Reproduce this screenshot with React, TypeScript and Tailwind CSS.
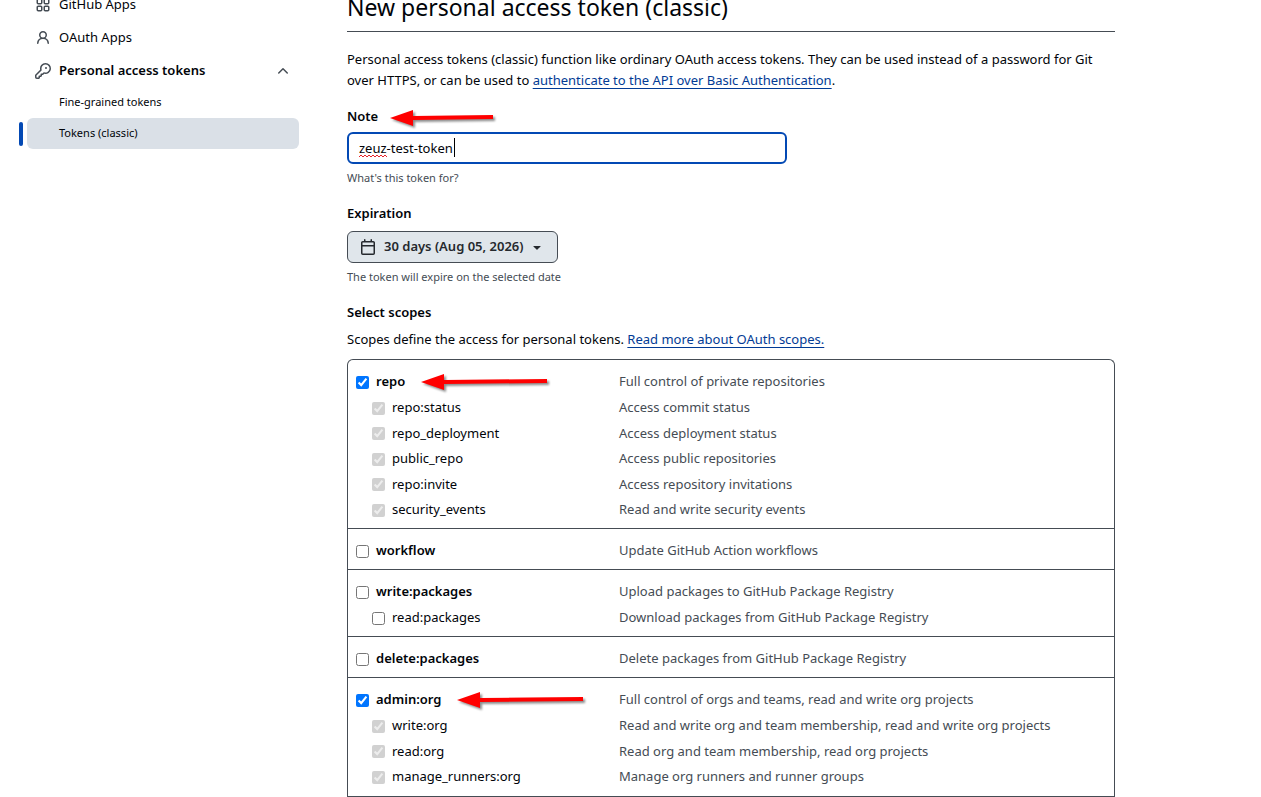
import type { ReactNode } from "react";

const icons = {
  apps: "M1.5 3.25c0-.966.784-1.75 1.75-1.75h2.5c.966 0 1.75.784 1.75 1.75v2.5A1.75 1.75 0 0 1 5.75 7.5h-2.5A1.75 1.75 0 0 1 1.5 5.75Zm7 0c0-.966.784-1.75 1.75-1.75h2.5c.966 0 1.75.784 1.75 1.75v2.5a1.75 1.75 0 0 1-1.75 1.75h-2.5A1.75 1.75 0 0 1 8.5 5.75Zm-7 7c0-.966.784-1.75 1.75-1.75h2.5c.966 0 1.75.784 1.75 1.75v2.5a1.75 1.75 0 0 1-1.75 1.75h-2.5a1.75 1.75 0 0 1-1.75-1.75Zm7 0c0-.966.784-1.75 1.75-1.75h2.5c.966 0 1.75.784 1.75 1.75v2.5a1.75 1.75 0 0 1-1.75 1.75h-2.5a1.75 1.75 0 0 1-1.75-1.75ZM3.25 3a.25.25 0 0 0-.25.25v2.5c0 .138.112.25.25.25h2.5A.25.25 0 0 0 6 5.75v-2.5A.25.25 0 0 0 5.75 3Zm7 0a.25.25 0 0 0-.25.25v2.5c0 .138.112.25.25.25h2.5a.25.25 0 0 0 .25-.25v-2.5a.25.25 0 0 0-.25-.25Zm-7 7a.25.25 0 0 0-.25.25v2.5c0 .138.112.25.25.25h2.5a.25.25 0 0 0 .25-.25v-2.5a.25.25 0 0 0-.25-.25Zm7 0a.25.25 0 0 0-.25.25v2.5c0 .138.112.25.25.25h2.5a.25.25 0 0 0 .25-.25v-2.5a.25.25 0 0 0-.25-.25Z",
  person:
    "M10.561 8.073a6.005 6.005 0 0 1 3.432 5.142.75.75 0 1 1-1.498.07 4.5 4.5 0 0 0-8.99 0 .75.75 0 0 1-1.498-.07 6.004 6.004 0 0 1 3.431-5.142 3.999 3.999 0 1 1 5.123 0ZM10.5 5a2.5 2.5 0 1 0-5 0 2.5 2.5 0 0 0 5 0Z",
  key: "M10.5 0a5.499 5.499 0 1 1-1.288 10.848l-.932.932a.749.749 0 0 1-.53.22H7v.75a.749.749 0 0 1-.22.53l-.5.5a.749.749 0 0 1-.53.22H5v.75a.749.749 0 0 1-.22.53l-.5.5a.749.749 0 0 1-.53.22h-2A1.75 1.75 0 0 1 0 14.25v-2c0-.199.079-.389.22-.53l4.932-4.932A5.5 5.5 0 0 1 10.5 0Zm-4 5.5c-.001.431.069.86.205 1.269a.75.75 0 0 1-.181.768L1.5 12.56v1.69c0 .138.112.25.25.25h1.69l.06-.06v-1.19a.75.75 0 0 1 .75-.75h1.19l.06-.06v-1.19a.75.75 0 0 1 .75-.75h1.19l1.023-1.025a.75.75 0 0 1 .768-.18A4 4 0 1 0 6.5 5.5ZM11 6a1 1 0 1 1 0-2 1 1 0 0 1 0 2Z",
  chevronUp:
    "M3.22 10.53a.749.749 0 0 1 0-1.06l4.25-4.25a.749.749 0 0 1 1.06 0l4.25 4.25a.749.749 0 1 1-1.06 1.06L8 6.811 4.28 10.53a.749.749 0 0 1-1.06 0Z",
  calendar:
    "M4.75 0a.75.75 0 0 1 .75.75V2h5V.75a.75.75 0 0 1 1.5 0V2h1.25c.966 0 1.75.784 1.75 1.75v10.5A1.75 1.75 0 0 1 13.25 16H2.75A1.75 1.75 0 0 1 1 14.25V3.75C1 2.784 1.784 2 2.75 2H4V.75A.75.75 0 0 1 4.75 0ZM2.5 7.5v6.75c0 .138.112.25.25.25h10.5a.25.25 0 0 0 .25-.25V7.5Zm10.75-4H2.75a.25.25 0 0 0-.25.25V6h11V3.75a.25.25 0 0 0-.25-.25Z",
  triangleDown:
    "m4.427 7.427 3.396 3.396a.25.25 0 0 0 .354 0l3.396-3.396A.25.25 0 0 0 11.396 7H4.604a.25.25 0 0 0-.177.427Z",
};

type Scope = {
  name: string;
  description: string;
  checked?: boolean;
  highlight?: boolean;
  children?: { name: string; description: string }[];
};

const scopes: Scope[] = [
  {
    name: "repo",
    description: "Full control of private repositories",
    checked: true,
    highlight: true,
    children: [
      { name: "repo:status", description: "Access commit status" },
      { name: "repo_deployment", description: "Access deployment status" },
      { name: "public_repo", description: "Access public repositories" },
      { name: "repo:invite", description: "Access repository invitations" },
      { name: "security_events", description: "Read and write security events" },
    ],
  },
  { name: "workflow", description: "Update GitHub Action workflows" },
  {
    name: "write:packages",
    description: "Upload packages to GitHub Package Registry",
    children: [
      { name: "read:packages", description: "Download packages from GitHub Package Registry" },
    ],
  },
  { name: "delete:packages", description: "Delete packages from GitHub Package Registry" },
  {
    name: "admin:org",
    description: "Full control of orgs and teams, read and write org projects",
    checked: true,
    highlight: true,
    children: [
      { name: "write:org", description: "Read and write org and team membership, read and write org projects" },
      { name: "read:org", description: "Read org and team membership, read org projects" },
      { name: "manage_runners:org", description: "Manage org runners and runner groups" },
    ],
  },
];

function Icon({ name, className }: { name: keyof typeof icons; className?: string }) {
  return (
    <svg viewBox="0 0 16 16" className={`size-4 shrink-0 fill-current ${className ?? ""}`} aria-hidden="true">
      <path d={icons[name]} />
    </svg>
  );
}

function Arrow({ length }: { length: number }) {
  return (
    <svg
      width={length}
      height="16"
      className="shrink-0 drop-shadow-[2px_2px_1px_rgba(0,0,0,0.45)]"
      aria-hidden="true"
    >
      <path d={`M0 8 23 0V6L${length} 5V9L23 10V16Z`} fill="#ff0000" />
    </svg>
  );
}

function TextLink({ children }: { children: ReactNode }) {
  return (
    <a href="#" className="text-[#023b95] underline underline-offset-3">
      {children}
    </a>
  );
}

function Sidebar() {
  return (
    <nav className="w-[272px] shrink-0">
      <a href="#" className="flex h-[33px] items-center gap-2 px-2">
        <Icon name="apps" className="text-[#454c54]" />
        GitHub Apps
      </a>
      <a href="#" className="flex h-[33px] items-center gap-2 px-2">
        <Icon name="person" className="text-[#454c54]" />
        OAuth Apps
      </a>
      <button type="button" className="flex h-[33px] w-full items-center gap-2 px-2 font-semibold">
        <Icon name="key" className="text-[#454c54]" />
        Personal access tokens
        <Icon name="chevronUp" className="ml-auto text-[#454c54]" />
      </button>
      <a href="#" className="flex h-[31px] items-center pl-8 text-[11px]">
        Fine-grained tokens
      </a>
      <a
        href="#"
        className="relative flex h-[31px] items-center rounded-md bg-[#dae0e7] pl-8 text-[11px] before:absolute before:-left-2 before:h-6 before:w-1 before:rounded-md before:bg-[#0349b4]"
      >
        Tokens (classic)
      </a>
    </nav>
  );
}

function ScopeGroup({ scope }: { scope: Scope }) {
  return (
    <li className="border-b border-[#454c54] pt-[9px] pb-[5px] last:pb-[6px]">
      <div className="flex h-[26px] items-center">
        <div className="flex w-[263px] shrink-0 items-center">
          <label className="flex items-center gap-[7px] font-semibold">
            <input type="checkbox" defaultChecked={scope.checked} className="size-[13px]" />
            {scope.name}
          </label>
          {scope.highlight && (
            <span className="ml-4">
              <Arrow length={126} />
            </span>
          )}
        </div>
        <span className="text-[#454c54]">{scope.description}</span>
      </div>
      {scope.children && (
        <ul>
          {scope.children.map((child) => (
            <li key={child.name} className="flex items-center odd:h-[26px] even:h-[25px]">
              <label className="flex w-[263px] shrink-0 items-center gap-[7px] pl-4">
                <input
                  type="checkbox"
                  defaultChecked={scope.checked}
                  disabled={scope.checked}
                  className="size-[13px]"
                />
                {child.name}
              </label>
              <span className="text-[#454c54]">{child.description}</span>
            </li>
          ))}
        </ul>
      )}
    </li>
  );
}

export default function App() {
  return (
    <div className="overflow-hidden bg-white font-['Noto_Sans',sans-serif] text-[13px] text-[#010409]">
      <div className="-mt-3 flex gap-12 pr-[146px] pl-[27px]">
        <Sidebar />
        <main className="min-w-0 flex-1">
          <h1 className="border-b border-[#454c54] pt-px pb-[6px] text-[23px] leading-9">
            New personal access token (classic)
          </h1>
          <p className="mt-[17px] leading-[21px]">
            Personal access tokens (classic) function like ordinary OAuth access tokens. They can be used
            instead of a password for Git over HTTPS, or can be used to{" "}
            <TextLink>authenticate to the API over Basic Authentication</TextLink>.
          </p>

          <div className="mt-[15px] flex h-[21px] items-center gap-3">
            <label htmlFor="note" className="font-semibold">
              Note
            </label>
            <span className="pt-[2px]">
              <Arrow length={103} />
            </span>
          </div>
          <div className="relative mt-[5px] max-w-[440px]">
            <input
              id="note"
              type="text"
              defaultValue="zeuz-test-token"
              spellCheck={false}
              className="h-8 w-full rounded-md border-2 border-[#0349b4] px-[10px] outline-none"
            />
            {/* spelling mark and text caret */}
            <svg className="absolute top-[22px] left-[12px]" width="28" height="4" aria-hidden="true">
              <path
                d="M0 3 2 1 4 3 6 1 8 3 10 1 12 3 14 1 16 3 18 1 20 3 22 1 24 3 26 1 28 3"
                fill="none"
                stroke="#e8222a"
              />
            </svg>
            <span className="absolute top-[6px] left-[107px] h-[19px] w-px bg-black" />
          </div>
          <p className="mt-[5px] text-[11px] leading-[18px] text-[#454c54]">What's this token for?</p>

          <h2 className="mt-4 font-semibold leading-[21px]">Expiration</h2>
          <button
            type="button"
            className="mt-[7px] flex h-8 items-center gap-2 rounded-md border border-[#454c54] bg-[#e0e6eb] px-3 font-semibold text-[#25292e]"
          >
            <Icon name="calendar" />
            30 days (Aug 05, 2026)
            <Icon name="triangleDown" className="-ml-[3px]" />
          </button>
          <p className="mt-[5px] text-[11px] leading-[18px] text-[#454c54]">
            The token will expire on the selected date
          </p>

          <h2 className="mt-4 font-semibold leading-[21px]">Select scopes</h2>
          <p className="mt-[6px] leading-[21px]">
            Scopes define the access for personal tokens. <TextLink>Read more about OAuth scopes.</TextLink>
          </p>
          <ul className="mt-[9px] rounded-t-md border border-b-0 border-[#454c54] *:px-2">
            {scopes.map((scope) => (
              <ScopeGroup key={scope.name} scope={scope} />
            ))}
          </ul>
        </main>
      </div>
    </div>
  );
}
